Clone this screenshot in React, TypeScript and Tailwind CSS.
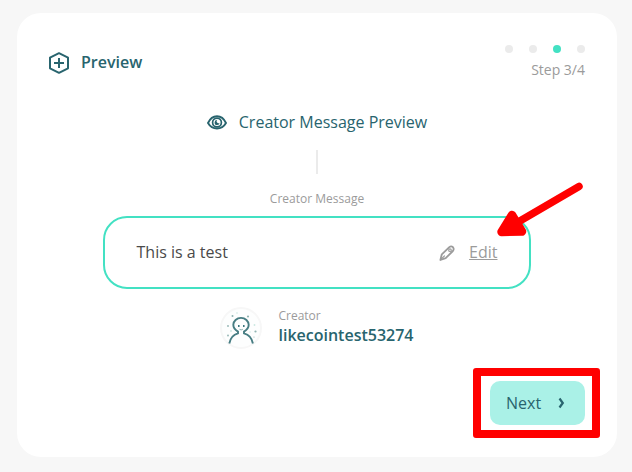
function HexPlusIcon() {
  return (
    <svg className="h-6 w-5 shrink-0" viewBox="0 0 20 24" fill="none" stroke="#28646e" strokeWidth="2" strokeLinejoin="round">
      <path d="M10 2.200 19 6.700V17.300L10 21.800 1 17.300V6.700Z" />
      <path d="M10 7v10M5 12h10" />
    </svg>
  );
}

function EyeIcon() {
  return (
    <svg className="h-4 w-5 shrink-0" viewBox="0 0 20 16" fill="none" stroke="#28646e">
      <path d="M1 9C3.300 4 6.300 2.200 10 2.200s6.700 1.800 9 6.800c-2.300 4-5.300 5.500-9 5.500S3.300 13 1 9Z" strokeWidth="1.900" strokeLinejoin="round" />
      <circle cx="10" cy="8.500" r="4.400" strokeWidth="1.700" />
      <path d="M10.200 6.100A2.500 2.500 0 1 0 12.600 8.700 1.700 1.700 0 0 1 10.200 6.100Z" fill="#28646e" stroke="none" />
    </svg>
  );
}

function PencilIcon() {
  return (
    <svg className="h-4 w-4 shrink-0" viewBox="0 0 16 16" fill="none" stroke="#9b9b9b" strokeWidth="1.800" strokeLinejoin="round" strokeLinecap="round">
      <path d="M1.400 15 2.800 9.300 10.300 2.100Q12.200.700 14 2.200 15.400 4.200 13.900 6L6.700 13.200Z" />
      <path d="M2.300 14 5.500 10.800" strokeWidth="1.200" />
      <circle cx="11" cy="5.200" r="1.300" strokeWidth="1.200" />
    </svg>
  );
}

function Avatar() {
  return (
    <svg className="h-[42px] w-[42px] shrink-0" viewBox="0 0 42 42" fill="none">
      <circle cx="21" cy="21" r="20" fill="#fdfefe" stroke="#f7f7f7" strokeWidth="2" />
      <path d="M9.300 36.500C10.300 30.800 13.500 27.500 18 26.300V24.600C14.800 22.700 13.300 20.500 13.300 17.800a7.700 6.900 0 0 1 15.400 0c0 2.700-1.500 4.900-4.700 6.800v1.700c4.700 1.200 7.900 4.500 8.900 10.200" stroke="#477d83" strokeWidth="1.900" />
      <path d="M18.800 18v2M23.800 18v2" stroke="#34717a" strokeWidth="1.500" />
      <path d="M19.500 22.300q1.700 1.200 3.300 0" stroke="#8ab0b1" />
      <g fill="#91b4b2">
        <circle cx="12.500" cy="9" r="1" />
        <circle cx="28" cy="9.500" r="1.100" />
        <circle cx="8" cy="19" r=".9" />
        <circle cx="8" cy="28.500" r=".9" />
        <circle cx="35.500" cy="24.500" r="1.100" />
        <circle cx="34" cy="30" r=".6" />
      </g>
      <g fill="#cbe8e2">
        <circle cx="17" cy="6" r=".8" />
        <circle cx="34.500" cy="18" r=".9" />
        <circle cx="11" cy="24" r=".9" />
        <circle cx="30" cy="25" r=".7" />
      </g>
    </svg>
  );
}

export default function App() {
  return (
    <div className="h-[472px] w-[632px] overflow-hidden bg-[#f7f7f7] pt-[13px] pl-[17px] font-['Open_Sans',sans-serif] text-base text-[#28646e]">
      <main className="flex h-[444px] w-[600px] flex-col rounded-[24px] bg-white px-8 pt-8">
        <header className="flex h-[35px] justify-between">
          <div className="flex h-[35px] items-center gap-3">
            <HexPlusIcon />
            <h1 className="pb-0.5 font-semibold">Preview</h1>
          </div>
          <div className="flex flex-col items-end">
            <div className="flex gap-4">
              <i className="size-2 rounded-full bg-[#ebebeb]" />
              <i className="size-2 rounded-full bg-[#ebebeb]" />
              <i className="size-2 rounded-full bg-[#43e1c3]" />
              <i className="size-2 rounded-full bg-[#ebebeb]" />
            </div>
            <span className="mt-[7px] text-sm text-[#9b9b9b]">Step 3/4</span>
          </div>
        </header>

        <section className="flex flex-col items-center">
          <div className="mt-[30px] flex h-6 items-center gap-3">
            <EyeIcon />
            <h2>Creator Message Preview</h2>
          </div>
          <div className="mt-4 h-6 w-0.5 bg-[#ebebeb]" />
          <div className="mt-4 text-xs leading-[18px] text-[#9b9b9b]">Creator Message</div>
          <div className="relative mt-2 flex h-[73px] w-[428px] items-center justify-between rounded-[24px] border-2 border-[#43e1c3] pr-[31.500px] pl-[31.500px]">
            <span className="pb-0.5 text-[#4a4a4a]">This is a test</span>
            <div className="flex items-center gap-[14px] text-[#9b9b9b]">
              <PencilIcon />
              <span className="pb-0.5 underline">Edit</span>
            </div>
            <svg className="absolute -top-[36px] left-[388px] h-[60px] w-[95px]" viewBox="0 0 95 60" fill="red" stroke="red" strokeLinejoin="round" strokeLinecap="round">
              <path d="M86 4.500 26 39.500" strokeWidth="7.500" />
              <path d="m19 33 10 16.500-20.500.500Z" strokeWidth="8.500" />
            </svg>
          </div>
          <div className="mt-[18px] flex h-[42px] items-center gap-4">
            <Avatar />
            <div className="pb-1">
              <div className="text-xs leading-[18px] text-[#9b9b9b]">Creator</div>
              <div className="font-semibold leading-5">likecointest53274</div>
            </div>
          </div>
        </section>

        <div className="relative mt-8 flex justify-end">
          <button className="flex h-11 w-[95px] items-center justify-between rounded-[10px] bg-[#aaf1e7] pr-[19px] pl-4">
            Next
            <svg className="h-3 w-2" viewBox="0 0 8 12" fill="none" stroke="#28646e" strokeWidth="2.200">
              <path d="M1.500 1.500 4.800 6 1.500 10.500" />
            </svg>
          </button>
          <div className="absolute -top-[13px] -right-[15px] h-[70px] w-[127px] rounded-[3px] border-8 border-[#ff0000]" />
        </div>
      </main>
    </div>
  );
}
